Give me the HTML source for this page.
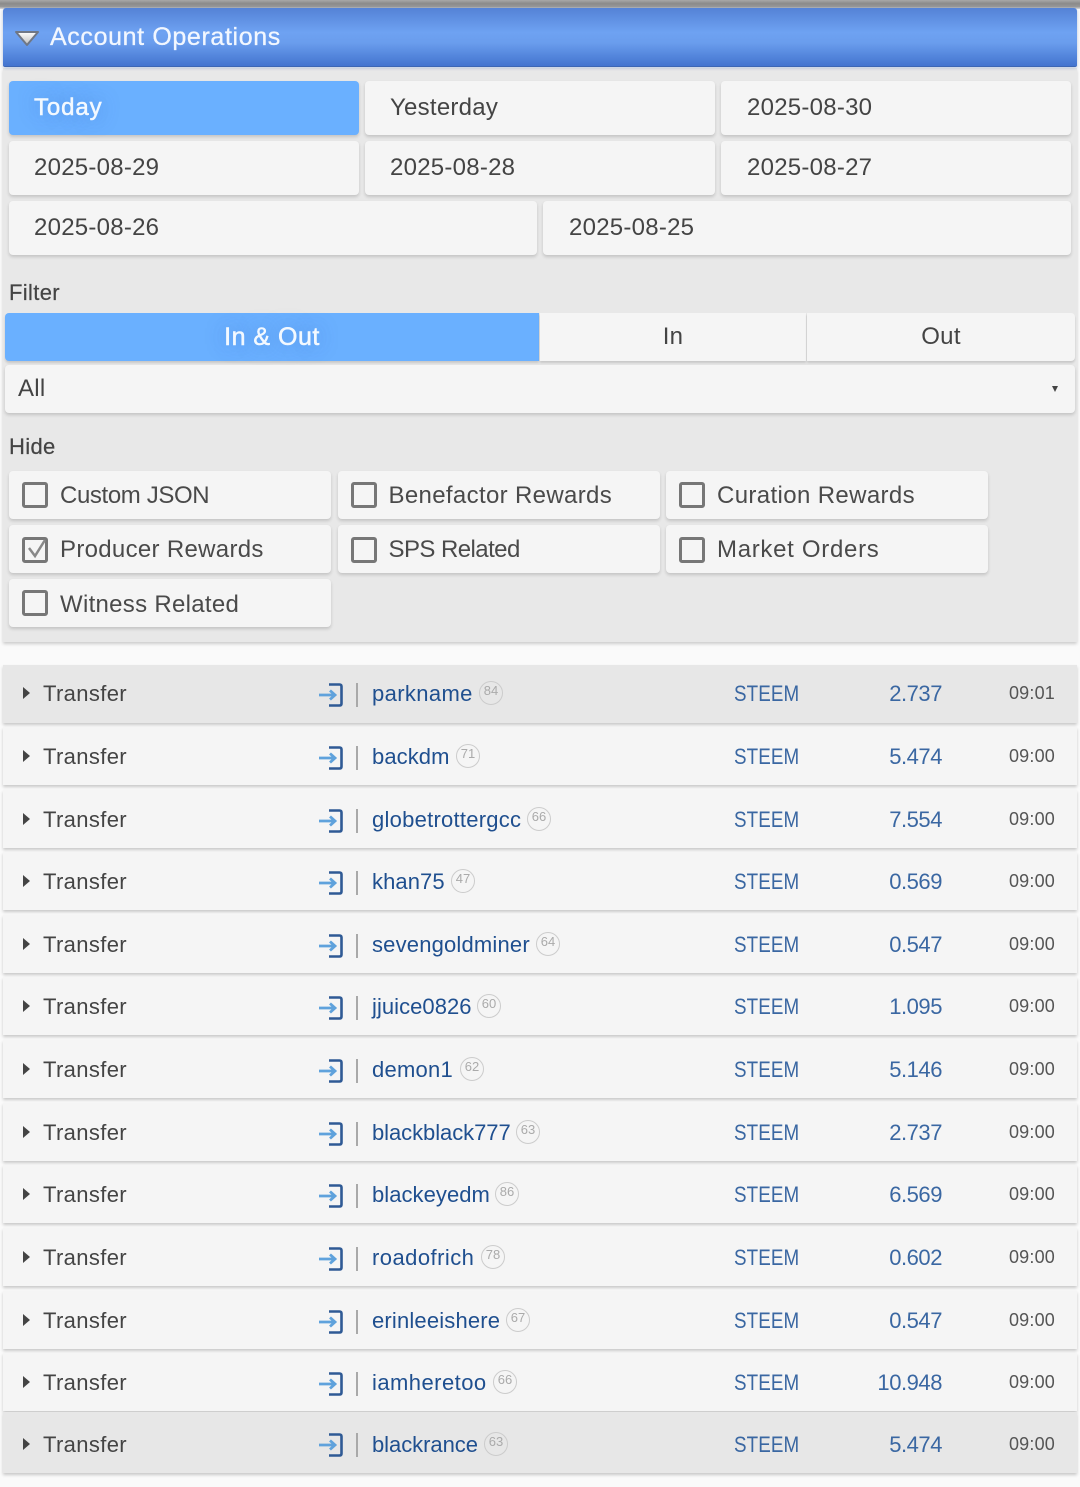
<!DOCTYPE html>
<html><head><meta charset="utf-8">
<style>
html,body{margin:0;padding:0;width:1080px;height:1487px;overflow:hidden;background:#fafafa}
body{position:relative;font-family:"Liberation Sans",sans-serif;color:#444}
div,span,svg{position:absolute;display:block;white-space:nowrap}
.top{left:0;top:0;width:1080px;height:9px;background:linear-gradient(#a8a8a8,#8a8a8a 40%,#999 75%,#ddd)}
.hd{left:3px;top:8px;width:1074px;height:59px;border-radius:3px 3px 2px 2px;background:linear-gradient(#5482d6,#6ea2f2 42%,#6a9ded 60%,#4374cf);border-bottom:1px solid #3c66b4;box-sizing:border-box;box-shadow:0 1px 3px rgba(60,100,170,.35);z-index:2}
.ttl{left:47px;top:14px;font-size:25px;line-height:30px;color:#f2f7ff;letter-spacing:.63px;-webkit-text-stroke:.3px #f2f7ff}
.panel{left:3px;top:68px;width:1074px;height:574px;background:#e8e8e8;box-shadow:0 2px 3px rgba(0,0,0,.18)}
.b{background:#f5f5f5;border-radius:4px;box-shadow:0 2px 3px rgba(0,0,0,.16);font-size:24px;line-height:54px;height:54px;color:#444;letter-spacing:.25px;box-sizing:border-box;padding-left:25px}
.lb{font-size:22px;line-height:28px;left:9px;color:#444;letter-spacing:.35px;-webkit-text-stroke:.2px #444}
.t{background:#f5f5f5;top:313px;height:48px;line-height:48px;font-size:24px;text-align:center;box-shadow:0 2px 2px rgba(0,0,0,.14);letter-spacing:.3px}
.b.on,.t.on{background:#6ab0ff;color:#f3f9ff;-webkit-text-stroke:.5px #f3f9ff;text-shadow:0 0 18px rgba(60,110,190,.55)}
.b.on{letter-spacing:.9px}
.t.on{font-size:25px;letter-spacing:.5px}
.c{background:#f5f5f5;border-radius:4px;box-shadow:0 2px 3px rgba(0,0,0,.16);width:322px;height:48px;font-size:24px;line-height:50px;color:#4a4a4a}
.c i{position:absolute;left:13px;top:11px;width:20px;height:20px;border:3px solid #777;border-radius:3px}
.c b{position:absolute;left:51px;top:0;font-weight:normal}
.m i{top:12px}
.r{left:3px;width:1074px;height:58px;background:#f5f5f5;box-shadow:0 2px 3px rgba(0,0,0,.2)}
.g{background:#e7e7e7}
.r span{line-height:30px;top:15px;font-size:22px}
.f span{top:14px}
.l span{top:18px}
.r .a{left:20px;top:23px;width:0;height:0;border-left:7px solid #444;border-top:6px solid transparent;border-bottom:6px solid transparent}
.f .a{top:22px}
.l .a{top:26px}
.ty{left:40px;color:#444;letter-spacing:.36px}
.r .sep{left:353px;top:19px;width:2px;height:24px;background:#a9a9a9}
.f .sep{top:18px}
.l .sep{top:21px}
.u{left:369px;color:#1f4f8f;letter-spacing:.25px}
.r .rp{top:17px;width:22px;height:22px;border:1px solid #ccc;border-radius:50%;text-align:center;font-size:13px;line-height:18px;color:#aaa}
.f .rp{top:16px}
.l .rp{top:20px}
.s{left:731px;color:#3a67a2;letter-spacing:.1px;transform:scaleX(.855);transform-origin:0 50%}
.n{right:135px;color:#3a67a2;letter-spacing:-.45px}
.r .tm{right:22px;top:14px;font-size:18px;color:#555;letter-spacing:.2px}
.f .tm{top:13px}
.l .tm{top:17px}
svg.ic{left:316px;top:19px}
.f svg.ic{top:18px}
.l svg.ic{top:21px}
</style></head><body>
<svg width="0" height="0" style="left:0;top:0"><symbol id="io" viewBox="0 0 24 24"><path d="M10 1.500H20.500Q22.500 1.500 22.500 3.500V20.500Q22.500 22.500 20.500 22.500H10" fill="none" stroke="#2f5a95" stroke-width="2.600"/><path d="M0 12H15M11 7.500L16 12L11 16.500" fill="none" stroke="#5fa2dc" stroke-width="2.800"/></symbol></svg>
<div class="top"></div>
<div class="hd"><svg style="left:10px;top:20px" width="28" height="20" viewBox="0 0 28 20"><defs><linearGradient id="tg" x1="0" y1="0" x2="0" y2="1"><stop offset="0" stop-color="#fff"/><stop offset="1" stop-color="#bdbdbd"/></linearGradient></defs><path d="M3 4H25L14 17Z" fill="url(#tg)" stroke="#6f7786" stroke-width="2" stroke-linejoin="round"/></svg><div class="ttl">Account Operations</div></div>
<div class="panel"></div>
<div class="b on" style="left:9px;top:81px;width:350px">Today</div>
<div class="b" style="left:365px;top:81px;width:350px">Yesterday</div>
<div class="b" style="left:721px;top:81px;width:350px;padding-left:26px">2025-08-30</div>
<div class="b" style="left:9px;top:141px;width:350px">2025-08-29</div>
<div class="b" style="left:365px;top:141px;width:350px">2025-08-28</div>
<div class="b" style="left:721px;top:141px;width:350px;padding-left:26px">2025-08-27</div>
<div class="b" style="left:9px;top:201px;width:528px">2025-08-26</div>
<div class="b" style="left:543px;top:201px;width:528px;padding-left:26px">2025-08-25</div>
<div class="lb" style="top:279px">Filter</div>
<div class="t on" style="left:5px;width:534px;border-radius:4px 0 0 4px">In &amp; Out</div>
<div class="t" style="left:540px;width:266px">In</div>
<div class="t" style="left:807px;width:268px;border-radius:0 4px 4px 0">Out</div>
<div class="b" style="left:5px;top:365px;width:1070px;height:48px;line-height:48px;padding-left:13px">All</div>
<div style="left:1052px;top:386px;width:0;height:0;border-left:3.500px solid transparent;border-right:3.500px solid transparent;border-top:6px solid #444"></div>
<div class="lb" style="top:433px">Hide</div>
<div class="c" style="left:9px;top:471px"><i></i><b style="letter-spacing:-.38px">Custom JSON</b></div>
<div class="c" style="left:337.500px;top:471px"><i></i><b style="letter-spacing:.34px">Benefactor Rewards</b></div>
<div class="c" style="left:666px;top:471px"><i></i><b style="letter-spacing:.37px">Curation Rewards</b></div>
<div class="c m" style="left:9px;top:525px"><i></i><svg style="left:16px;top:13px" width="24" height="24" viewBox="0 0 24 24"><path d="M4 10L10 18L20 2" fill="none" stroke="#888" stroke-width="2.500"/></svg><b style="letter-spacing:.31px">Producer Rewards</b></div>
<div class="c m" style="left:337.500px;top:525px"><i></i><b style="letter-spacing:-.56px">SPS Related</b></div>
<div class="c m" style="left:666px;top:525px"><i></i><b style="letter-spacing:.7px">Market Orders</b></div>
<div class="c" style="left:9px;top:579px;line-height:51px"><i></i><b style="letter-spacing:.29px">Witness Related</b></div>

<div class="r g f" style="top:665px"><span class="a"></span><span class="ty">Transfer</span><svg class="ic" width="24" height="24"><use href="#io"/></svg><span class="sep"></span><span class="u" style="letter-spacing:.37px">parkname</span><span class="rp" style="left:476px">84</span><span class="s">STEEM</span><span class="n">2.737</span><span class="tm">09:01</span></div>
<div class="r" style="top:727px"><span class="a"></span><span class="ty">Transfer</span><svg class="ic" width="24" height="24"><use href="#io"/></svg><span class="sep"></span><span class="u" style="letter-spacing:.08px">backdm</span><span class="rp" style="left:453px">71</span><span class="s">STEEM</span><span class="n">5.474</span><span class="tm">09:00</span></div>
<div class="r" style="top:790px"><span class="a"></span><span class="ty">Transfer</span><svg class="ic" width="24" height="24"><use href="#io"/></svg><span class="sep"></span><span class="u">globetrottergcc</span><span class="rp" style="left:524px">66</span><span class="s">STEEM</span><span class="n">7.554</span><span class="tm">09:00</span></div>
<div class="r" style="top:852px"><span class="a"></span><span class="ty">Transfer</span><svg class="ic" width="24" height="24"><use href="#io"/></svg><span class="sep"></span><span class="u" style="letter-spacing:.08px">khan75</span><span class="rp" style="left:448px">47</span><span class="s">STEEM</span><span class="n">0.569</span><span class="tm">09:00</span></div>
<div class="r" style="top:915px"><span class="a"></span><span class="ty">Transfer</span><svg class="ic" width="24" height="24"><use href="#io"/></svg><span class="sep"></span><span class="u" style="letter-spacing:.18px">sevengoldminer</span><span class="rp" style="left:533px">64</span><span class="s">STEEM</span><span class="n">0.547</span><span class="tm">09:00</span></div>
<div class="r" style="top:977px"><span class="a"></span><span class="ty">Transfer</span><svg class="ic" width="24" height="24"><use href="#io"/></svg><span class="sep"></span><span class="u" style="letter-spacing:.05px">jjuice0826</span><span class="rp" style="left:474px">60</span><span class="s">STEEM</span><span class="n">1.095</span><span class="tm">09:00</span></div>
<div class="r" style="top:1040px"><span class="a"></span><span class="ty">Transfer</span><svg class="ic" width="24" height="24"><use href="#io"/></svg><span class="sep"></span><span class="u">demon1</span><span class="rp" style="left:457px">62</span><span class="s">STEEM</span><span class="n">5.146</span><span class="tm">09:00</span></div>
<div class="r" style="top:1103px"><span class="a"></span><span class="ty">Transfer</span><svg class="ic" width="24" height="24"><use href="#io"/></svg><span class="sep"></span><span class="u" style="letter-spacing:-.06px">blackblack777</span><span class="rp" style="left:513px">63</span><span class="s">STEEM</span><span class="n">2.737</span><span class="tm">09:00</span></div>
<div class="r" style="top:1165px"><span class="a"></span><span class="ty">Transfer</span><svg class="ic" width="24" height="24"><use href="#io"/></svg><span class="sep"></span><span class="u" style="letter-spacing:.05px">blackeyedm</span><span class="rp" style="left:492px">86</span><span class="s">STEEM</span><span class="n">6.569</span><span class="tm">09:00</span></div>
<div class="r" style="top:1228px"><span class="a"></span><span class="ty">Transfer</span><svg class="ic" width="24" height="24"><use href="#io"/></svg><span class="sep"></span><span class="u" style="letter-spacing:.45px">roadofrich</span><span class="rp" style="left:478px">78</span><span class="s">STEEM</span><span class="n">0.602</span><span class="tm">09:00</span></div>
<div class="r" style="top:1291px"><span class="a"></span><span class="ty">Transfer</span><svg class="ic" width="24" height="24"><use href="#io"/></svg><span class="sep"></span><span class="u" style="letter-spacing:.17px">erinleeishere</span><span class="rp" style="left:503px">67</span><span class="s">STEEM</span><span class="n">0.547</span><span class="tm">09:00</span></div>
<div class="r" style="top:1353px"><span class="a"></span><span class="ty">Transfer</span><svg class="ic" width="24" height="24"><use href="#io"/></svg><span class="sep"></span><span class="u" style="letter-spacing:.45px">iamheretoo</span><span class="rp" style="left:490px">66</span><span class="s">STEEM</span><span class="n">10.948</span><span class="tm">09:00</span></div>
<div class="r g l" style="top:1412px;height:61px"><span class="a"></span><span class="ty">Transfer</span><svg class="ic" width="24" height="24"><use href="#io"/></svg><span class="sep"></span><span class="u" style="letter-spacing:-.05px">blackrance</span><span class="rp" style="left:481px">63</span><span class="s">STEEM</span><span class="n">5.474</span><span class="tm">09:00</span></div>
</body></html>
